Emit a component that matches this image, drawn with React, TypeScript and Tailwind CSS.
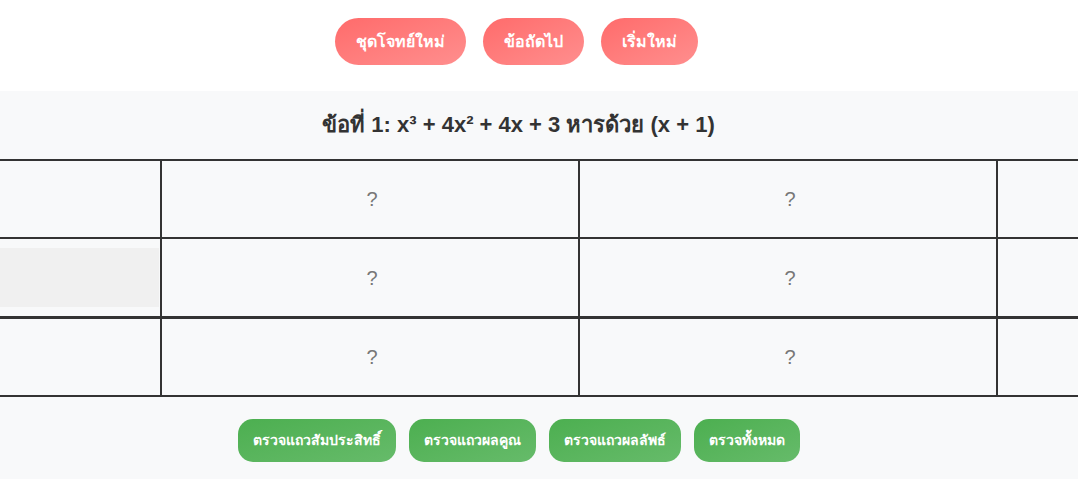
const topButtons = ['ชุดโจทย์ใหม่', 'ข้อถัดไป', 'เริ่มใหม่'];
const checkButtons = ['ตรวจแถวสัมประสิทธิ์', 'ตรวจแถวผลคูณ', 'ตรวจแถวผลลัพธ์', 'ตรวจทั้งหมด'];

function Cell({ text, wide, last }: { text?: string; wide?: boolean; last?: boolean }) {
  return (
    <div
      className={
        (wide ? 'w-[418px] shrink-0 ' : '') +
        (last ? 'flex-1 ' : 'border-r-2 border-[#333] ') +
        'flex items-center justify-center pl-[4px] text-[20px] text-[#777]'
      }
    >
      {text}
    </div>
  );
}

function Row({ h, bottom, first }: { h: string; bottom: string; first?: React.ReactNode }) {
  return (
    <div className={`flex ${h} ${bottom} border-[#333]`}>
      <div className="w-[162px] shrink-0 border-r-2 border-[#333] flex items-center">{first}</div>
      <Cell text="?" wide />
      <Cell text="?" wide />
      <Cell last />
    </div>
  );
}

export default function App() {
  return (
    <div className="w-[1078px] h-[479px] overflow-hidden bg-white font-['Liberation_Sans',Arial,sans-serif]">
      {/* top actions */}
      <div className="h-[91px] pt-[18px] pr-[46px] flex justify-center gap-[17px]">
        {topButtons.map((t) => (
          <button
            key={t}
            className="h-[47px] px-[21px] rounded-full bg-gradient-to-br from-[#ff6b6b] to-[#ff8e8e] text-white text-[16px] font-semibold"
          >
            {t}
          </button>
        ))}
      </div>

      <div className="bg-[#f8f9fa] h-[388px]">
        <h2 className="pt-[17px] h-[68px] pr-[41px] text-center text-[22px] font-bold text-[#333]">
          ข้อที่ 1: x³ + 4x² + 4x + 3 หารด้วย (x + 1)
        </h2>

        {/* synthetic division table */}
        <div className="border-t-2 border-[#333]">
          <Row h="h-[78px]" bottom="border-b-2" />
          <Row
            h="h-[80px]"
            bottom="border-b-[3px]"
            first={<div className="h-[59px] w-[159px] bg-[#f0f0f0]" />}
          />
          <Row h="h-[78px]" bottom="border-b-2" />
        </div>

        {/* check actions */}
        <div className="pt-[22px] pr-[41px] flex justify-center gap-[13px]">
          {checkButtons.map((t) => (
            <button
              key={t}
              className="h-[43px] px-[15px] rounded-[15px] bg-gradient-to-br from-[#4caf50] to-[#66bb6a] text-white text-[14px] font-bold"
            >
              {t}
            </button>
          ))}
        </div>
      </div>
    </div>
  );
}
